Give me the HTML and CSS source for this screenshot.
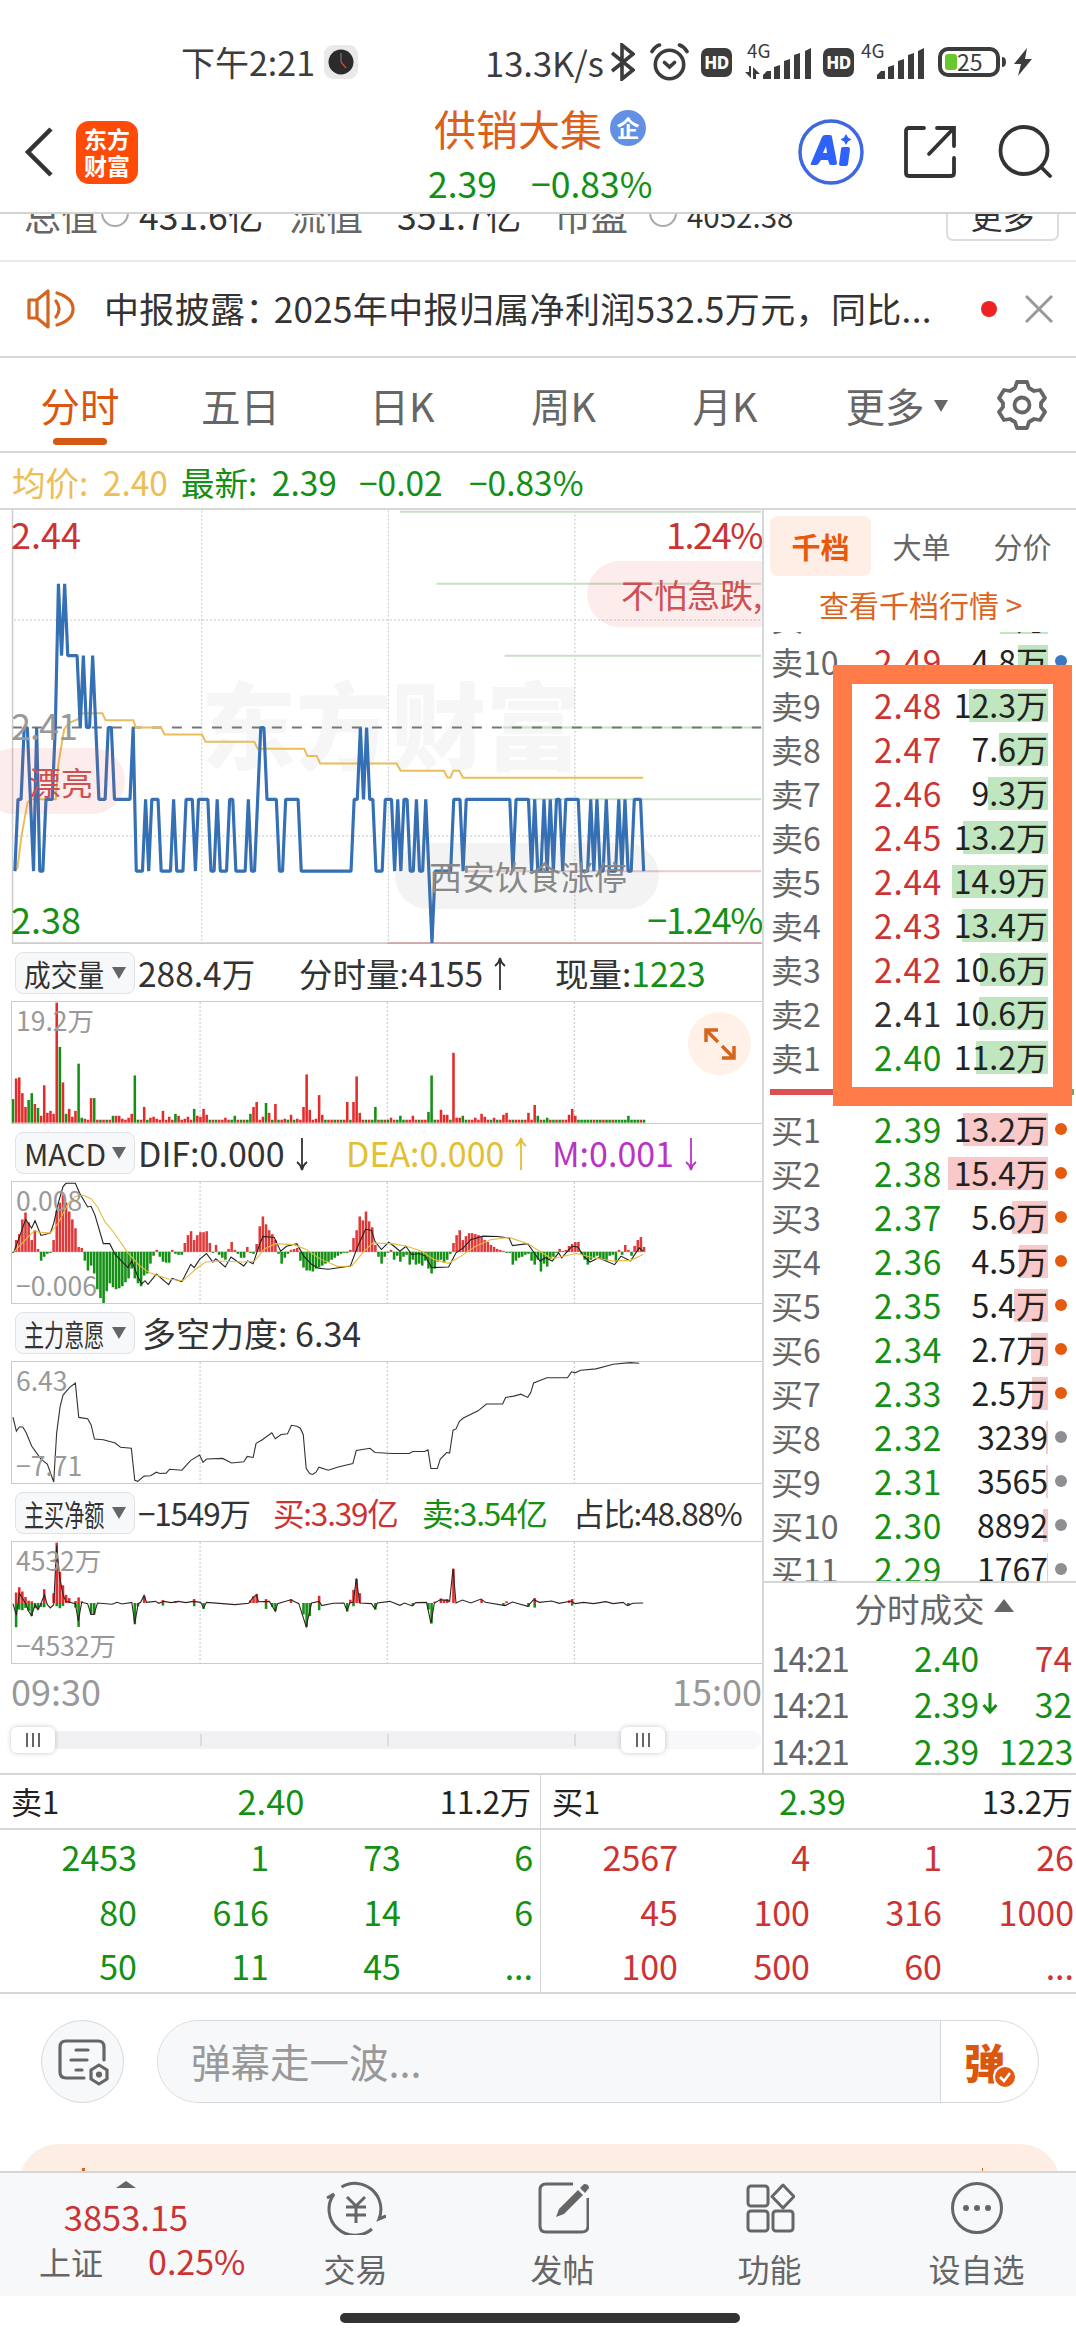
FILE: index.html
```html
<!DOCTYPE html>
<html lang="zh-CN">

<head>
    <meta charset="UTF-8">
    <title>供销大集</title>
    <link rel="stylesheet" href="styles.css">
</head>

<body>

    <div class="status-bar">
        <span class="time">下午2:21</span>
        <svg class="clock" width="34" height="34" viewBox="0 0 34 34">
            <rect width="34" height="34" rx="9" fill="#e9e9e9" />
            <circle cx="17" cy="17" r="12.5" fill="#2b2b2b" />
            <path d="M17 8v9" stroke="#777" stroke-width="1.2" />
            <path d="M17 17l5 6" stroke="#e0452f" stroke-width="1.2" />
        </svg>
        <span class="speed">13.3K/s</span>
        <svg class="bt" width="24" height="38" viewBox="0 0 24 38" fill="none" stroke="#3c3c3c" stroke-width="3.6">
            <path d="M1 10l21 17-11 9V2l11 9L1 28" />
        </svg>
        <svg class="alarm" width="39" height="38" viewBox="0 0 39 38" fill="none" stroke="#3c3c3c" stroke-width="3.6" stroke-linecap="round">
            <circle cx="19.5" cy="21.500" r="14.200" />
            <path d="M14.500 19.500l5 4.500 5-4.500M2 8.500q3-5 7.500-6.500M37 8.500q-3-5-7.500-6.500" />
        </svg>
        <span class="hd">HD</span>
        <svg class="signal" width="66" height="38" viewBox="0 0 66 38" fill="#3c3c3c">
            <text x="2" y="15" font-size="19">4G</text>
            <path d="M0 29h4v-6h2v12zM8 24l7 7h-4v5H8z" />
            <path d="M18 36v-4l4-4h4v8zM29 24l6-2v14h-6zM39 18l6-2v20h-6zM49 12l6-2v26h-6zM60 8l6-3v31h-6z" />
        </svg>
        <span class="hd hd2">HD</span>
        <svg class="signal2" width="64" height="38" viewBox="0 0 64 38" fill="#3c3c3c">
            <text x="0" y="15" font-size="19">4G</text>
            <path d="M16 36v-4l4-4h4v8zM27 24l6-2v14h-6zM37 18l6-2v20h-6zM47 12l6-2v26h-6zM57 8l6-3v31h-6z" />
        </svg>
        <svg class="battery" width="95" height="32" viewBox="0 0 95 32">
            <rect x="2" y="3" width="58" height="26" rx="8" fill="none" stroke="#3c3c3c" stroke-width="4" />
            <rect x="7" y="8" width="12" height="16" rx="3" fill="#6ac72d" />
            <path d="M64 11q4 0 4 5t-4 5z" fill="#3c3c3c" />
            <text x="19" y="24.500" font-size="23" fill="#3c3c3c">25</text>
            <path d="M89 2L76 18h7l-3 12 14-17h-7z" fill="#3c3c3c" />
        </svg>
    </div>

    <div class="header">
        <svg class="back" width="30" height="50" viewBox="0 0 30 50" fill="none" stroke="#333" stroke-width="4.500">
            <path d="M27 2L4 25l23 23" />
        </svg>
        <div class="logo">东方<br>财富</div>
        <div class="title">
            <div class="name">供销大集<span class="corp">企</span></div>
            <div class="quote"><span>2.39</span><span>−0.83%</span></div>
        </div>
        <svg class="ai" width="66" height="66" viewBox="0 0 66 66">
            <circle cx="33" cy="33" r="31" fill="none" stroke="#3f68e0" stroke-width="3.500" />
            <path d="M24 18q1-2 3-2h5q2 0 2 2l5 26q0 2-2 2h-4q-2 0-2-2l-1-3h-7l-2 3q-1 2-3 2h-4q-2 0-1-2zM25 34h4l-1-7z" fill="#2f62fb" fill-rule="evenodd" />
            <path d="M45 28h5q2 0 2 2l-2 15q0 2-2 2h-5q-2 0-2-2l2-15q0-2 2-2z" fill="#2f62fb" />
            <path d="M48 15l2 3.500 3.500 2-3.500 2-2 3.500-2-3.500-3.500-2 3.500-2z" fill="#2f62fb" />
        </svg>
        <svg class="share" width="54" height="54" viewBox="0 0 54 54" fill="none" stroke="#333" stroke-width="3.800" stroke-linecap="round">
            <path d="M21 3H6q-3 0-3 3v42q0 3 3 3h42q3 0 3-3V33M34 3h17v18M50 4L26 29" />
        </svg>
        <svg class="search" width="54" height="54" viewBox="0 0 54 54" fill="none" stroke="#333" stroke-width="3.800" stroke-linecap="round">
            <circle cx="26" cy="25.500" r="23.500" />
            <path d="M43 42l9 9" />
        </svg>
    </div>

    <div class="summary">
        <span class="lab">总值</span><i class="tip"></i><span class="v1">431.6亿</span>
        <span class="lab l2">流值</span><span class="v2">351.7亿</span>
        <span class="lab l3">市盈</span><i class="tip t2"></i><span class="v3">4052.38</span>
        <span class="more-btn">更多</span>
    </div>

    <div class="notice">
        <svg width="48" height="40" viewBox="0 0 48 40" fill="none" stroke="#d4651f" stroke-width="3.200" stroke-linejoin="round" stroke-linecap="round">
            <path d="M2 11h8L21 2v36l-11-9H2zM10 11v18M29 12q6 8 0 16M30 4q16 5 16 16T30 36" />
        </svg>
        <span class="notice-text"><span class="kind">中报披露：</span>2025年中报归属净利润532.5万元，同比...</span>
        <i class="red-dot"></i>
        <svg width="28" height="28" viewBox="0 0 28 28" stroke="#999" stroke-width="3">
            <path d="M1 1l26 26M27 1L1 27" />
        </svg>
    </div>

    <div class="tabs">
        <span class="tab active">分时</span>
        <span class="tab">五日</span>
        <span class="tab">日K</span>
        <span class="tab">周K</span>
        <span class="tab">月K</span>
        <span class="tab tab-more">更多<i class="tri"></i></span>
        <svg class="gear" width="50" height="50" viewBox="0 0 50 50" fill="none" stroke="#666" stroke-width="3.800" stroke-linejoin="round">
            <path d="M20 2h10l2 6 5 3 6-1 5 8-4 5v4l4 5-5 8-6-1-5 3-2 6H20l-2-6-5-3-6 1-5-8 4-5v-4l-4-5 5-8 6 1 5-3z" />
            <circle cx="25" cy="25" r="7.500" />
        </svg>
    </div>

    <div class="info">
        <span class="avg">均价: 2.40</span>
        <span>最新: 2.39</span>
        <span>−0.02</span>
        <span>−0.83%</span>
    </div>

    <div class="main">
        <div class="left">
            <div class="chart price-chart">
                <span class="watermark">东方财富</span>
                <svg id="price" viewBox="33 30 2256 1305"></svg>
                <span class="ylab top red">2.44</span>
                <span class="ylab mid">2.41</span>
                <span class="ylab low green">2.38</span>
                <span class="ylab top right red">1.24%</span>
                <span class="ylab low right green">−1.24%</span>
                <span class="bullet b1">漂亮</span>
                <span class="bullet b2">不怕急跌,</span>
                <span class="bullet b3">西安饮食涨停</span>
            </div>

            <div class="sub-head vol-head">
                <span class="pick"><b class="c3">成交量</b><i class="tri"></i></span>
                <span>288.4万</span>
                <span class="val">分时量:4155<svg class="arrow" viewBox="0 0 14 34"><path d="M7 33V1M2 9q4-3 5-8 1 5 5 8" /></svg></span>
                <span>现量:<span class="green">1223</span></span>
            </div>
            <div class="chart sub">
                <svg id="volume" viewBox="22 184 1531 369" preserveAspectRatio="none"></svg>
                <span class="slab s-top">19.2万</span>
                <svg class="expand" width="63" height="63" viewBox="0 0 63 63" fill="none" stroke="#d4651f" stroke-width="3.500">
                    <circle cx="31.500" cy="31.500" r="31.500" fill="#fff0e8" stroke="none" />
                    <path d="M30 18H18v12M18 18l12 12M34 46h12V34M46 46L34 34" />
                </svg>
            </div>

            <div class="sub-head macd-head">
                <span class="pick"><b>MACD</b><i class="tri"></i></span>
                <span class="val">DIF:0.000<svg class="arrow" viewBox="0 0 14 34"><path d="M7 1v32M2 25q4 3 5 8 1-5 5-8" /></svg></span>
                <span class="val yellow">DEA:0.000<svg class="arrow" viewBox="0 0 14 34"><path d="M7 33V1M2 9q4-3 5-8 1 5 5 8" /></svg></span>
                <span class="val purple">M:0.001<svg class="arrow" viewBox="0 0 14 34"><path d="M7 1v32M2 25q4 3 5 8 1-5 5-8" /></svg></span>
            </div>
            <div class="chart sub">
                <svg id="macd" viewBox="22 724 1531 369" preserveAspectRatio="none"></svg>
                <span class="slab s-top">0.008</span>
                <span class="slab s-low">−0.006</span>
            </div>

            <div class="sub-head power-head">
                <span class="pick"><b class="c4">主力意愿</b><i class="tri"></i></span>
                <span>多空力度: 6.34</span>
            </div>
            <div class="chart sub">
                <svg id="power" viewBox="22 184 1531 369" preserveAspectRatio="none"></svg>
                <span class="slab s-top">6.43</span>
                <span class="slab s-low">−7.71</span>
            </div>

            <div class="sub-head net-head">
                <span class="pick"><b class="c4">主买净额</b><i class="tri"></i></span>
                <span>−1549万</span><span class="red">买:3.39亿</span><span class="green">卖:3.54亿</span><span>占比:48.88%</span>
            </div>
            <div class="chart sub">
                <svg id="net" viewBox="22 724 1531 369" preserveAspectRatio="none"></svg>
                <span class="slab s-top">4532万</span>
                <span class="slab s-low">−4532万</span>
            </div>

            <div class="times"><span>09:30</span><span>15:00</span></div>
            <div class="slider">
                <div class="track"></div>
                <i class="handle h1"></i>
                <i class="handle h2"></i>
            </div>
        </div>

        <div class="right">
            <div class="book-tabs">
                <span class="book-tab on">千档</span>
                <span class="book-tab">大单</span>
                <span class="book-tab">分价</span>
            </div>
            <div class="book-link">查看千档行情 &gt;</div>
            <div class="book">
                <div id="asks"></div>
                <div class="ratio"></div>
                <div id="bids"></div>
            </div>
            <div class="mark-box"></div>
            <div class="deals">
                <div class="deals-title">分时成交<i class="tri up"></i></div>
                <div class="deal"><span>14:21</span><span class="green">2.40</span><i></i><span class="red">74</span></div>
                <div class="deal"><span>14:21</span><span class="green">2.39</span><i>
                    <svg width="16" height="22" viewBox="0 0 16 22" fill="none" stroke="#149014" stroke-width="3"><path d="M8 0v19M1.500 12L8 19l6.500-7" /></svg>
                </i><span class="green">32</span></div>
                <div class="deal"><span>14:21</span><span class="green">2.39</span><i></i><span class="green">1223</span></div>
            </div>
        </div>
    </div>

    <div class="queues">
        <div class="queue">
            <div class="queue-head"><span>卖1</span><span class="green">2.40</span><span>11.2万</span></div>
            <div class="queue-grid green">
                <span>2453</span><span>1</span><span>73</span><span>6</span>
                <span>80</span><span>616</span><span>14</span><span>6</span>
                <span>50</span><span>11</span><span>45</span><span>...</span>
            </div>
        </div>
        <div class="queue">
            <div class="queue-head"><span>买1</span><span class="green">2.39</span><span>13.2万</span></div>
            <div class="queue-grid red">
                <span>2567</span><span>4</span><span>1</span><span>26</span>
                <span>45</span><span>100</span><span>316</span><span>1000</span>
                <span>100</span><span>500</span><span>60</span><span>...</span>
            </div>
        </div>
    </div>

    <div class="danmu">
        <div class="danmu-set">
            <svg width="52" height="48" viewBox="0 0 52 48" fill="none" stroke="#666" stroke-width="3.200" stroke-linecap="round">
                <path d="M27 40H9q-6 0-6-6V9q0-6 6-6h32q6 0 6 6v13M19 12h12M14 22h16M19 32h6" />
                <path d="M42 27l8 5v9l-8 5-8-5v-9z" stroke-linejoin="round" />
                <circle cx="42" cy="36.500" r="1.500" fill="#666" />
            </svg>
        </div>
        <div class="danmu-box">
            <span class="danmu-input">弹幕走一波...</span>
            <span class="danmu-send">弹
                <svg width="24" height="24" viewBox="0 0 24 24" fill="none">
                    <circle cx="12" cy="12" r="11" fill="#e05a10" stroke="#fff" stroke-width="2" />
                    <path d="M7 12l4 4 6-8" stroke="#fff" stroke-width="2.500" />
                </svg>
            </span>
        </div>
    </div>

    <div class="promo-wrap"><div class="promo"><i></i><i></i></div></div>

    <div class="nav">
        <div class="index">
            <i class="tri up"></i>
            <div class="index-value">3853.15</div>
            <div class="index-row"><span>上证</span><span class="red">0.25%</span></div>
        </div>
        <div class="nav-item">
            <svg width="60" height="54" viewBox="0 0 60 54" fill="none" stroke="#666" stroke-width="3">
                <path d="M15.500 6A26 26 0 0 1 53 38l7-3M46 48A26 26 0 0 1 8 13l-7 4M21 16l9 9 9-9M30 25v17M20 26h20M20 34h20" />
            </svg>
            <span>交易</span>
        </div>
        <div class="nav-item">
            <svg width="52" height="54" viewBox="0 0 52 54" fill="none" stroke="#666" stroke-width="3">
                <path d="M36 3H9Q3 3 3 9v36q0 6 6 6h36q6 0 6-6V17" />
                <path d="M19 36l3-8 19-19 5 5-19 19zM43 7l4-4q5 0 5 4l-4 5z" fill="#666" stroke="none" />
            </svg>
            <span>发帖</span>
        </div>
        <div class="nav-item">
            <svg width="50" height="54" viewBox="0 0 50 54" fill="none" stroke="#666" stroke-width="3" stroke-linejoin="round">
                <rect x="3" y="5" width="20" height="20" rx="3" />
                <rect x="3" y="30" width="20" height="20" rx="3" />
                <rect x="28" y="30" width="20" height="20" rx="3" />
                <path d="M38 4l11 11.500L38 27 27 15.500z" />
            </svg>
            <span>功能</span>
        </div>
        <div class="nav-item">
            <svg width="54" height="54" viewBox="0 0 54 54" fill="none" stroke="#666" stroke-width="3">
                <circle cx="27" cy="27" r="24.500" />
                <g fill="#666" stroke="none"><circle cx="16" cy="27" r="3" /><circle cx="27" cy="27" r="3" /><circle cx="38" cy="27" r="3" /></g>
            </svg>
            <span>设自选</span>
        </div>
    </div>
    <div class="home-bar"></div>

    <script src="script.js"></script>
</body>

</html>
```

FILE: styles.css
```css
* {
    box-sizing: border-box;
}

body {
    margin: 0;
    width: 1076px;
    height: 2340px;
    overflow: hidden;
    background: #fff;
    color: #333;
    font-family: "Noto Sans CJK SC", sans-serif;
    font-size: 33px;
    line-height: 1;
    white-space: nowrap;
}

i {
    font-style: normal;
}

svg {
    display: block;
    flex: none;
}

.red { color: #cc3333; }
.green { color: #149014; }
.yellow { color: #e3bf33; }
.purple { color: #bb33c4; }

.tri {
    display: inline-block;
    border: 7px solid transparent;
    border-top: 12px solid #666;
    border-bottom: 0;
}

.tri.up {
    border-top: 0;
    border-bottom: 12px solid #666;
}

/* status bar */
.status-bar {
    display: flex;
    align-items: center;
    height: 96px;
    padding: 28px 0 0 181px;
    color: #3c3c3c;
}

.status-bar svg text {
    font-family: "Noto Sans CJK SC", sans-serif;
}

.time {
    width: 143px;
    font-size: 34px;
}

.speed {
    width: 124px;
    margin-left: 127px;
    font-size: 34.5px;
}

.bt { margin-left: 2px; }
.alarm { margin-left: 15px; }

.hd {
    width: 31px;
    height: 29px;
    margin-left: 12px;
    border-radius: 7px;
    background: #3c3c3c;
    color: #fff;
    font: 800 17px/29px "Noto Sans", sans-serif;
    letter-spacing: -0.5px;
    text-align: center;
}

.signal { margin-left: 13px; }
.hd2 { margin-left: 12px; }
.signal2 { margin-left: 7px; }
.battery { margin-left: 13px; }

/* header */
.header {
    display: flex;
    align-items: center;
    height: 118px;
    padding-left: 24px;
    padding-bottom: 4px;
    border-bottom: 2px solid #d4d4d4;
}

.logo {
    width: 62px;
    height: 63px;
    margin-left: 22px;
    padding-top: 4px;
    border-radius: 13px;
    background: #fe4b08;
    color: #fff;
    font-size: 23px;
    font-weight: 700;
    line-height: 27px;
    text-align: center;
}

.title {
    width: 230px;
    margin-left: 290px;
    padding-top: 10px;
}

.name {
    display: flex;
    align-items: center;
    height: 52px;
    padding-left: 6px;
    color: #dc6019;
    font-size: 42px;
}

.corp {
    width: 36px;
    height: 36px;
    margin-left: 8px;
    border-radius: 50%;
    background: #6390e5;
    color: #fff;
    font-size: 23px;
    font-weight: 700;
    line-height: 34px;
    text-align: center;
}

.quote {
    display: flex;
    gap: 34px;
    height: 58px;
    align-items: center;
    color: #149014;
    font-size: 35.5px;
}

.ai { margin-left: 140px; }
.share { margin-left: 39px; }
.search { margin-left: 41px; }

/* scrolled summary row */
.summary {
    display: flex;
    height: 48px;
    overflow: hidden;
    padding-left: 24px;
    border-bottom: 2px solid #e8e8e8;
    font-size: 35.5px;
    line-height: 46px;
}

.summary > * {
    flex: none;
    margin-top: -22px;
}

.summary .lab {
    width: 77px;
    color: #666;
    font-size: 37px;
}

.summary .tip {
    width: 28px;
    height: 28px;
    margin-top: -15px;
    border: 2px solid #aaa;
    border-radius: 50%;
}

.summary .v1 { width: 150px; margin-left: 10px; }
.summary .v2 { width: 157px; margin-left: 31px; }
.summary .t2 { margin-left: 18px; }
.summary .v3 { width: 259px; margin-left: 10px; font-size: 29.5px; }

.summary .more-btn {
    width: 113px;
    height: 49px;
    border: 2px solid #ddd;
    border-radius: 7px;
    font-size: 32px;
    line-height: 43px;
    text-align: center;
}

.notice {
    display: flex;
    align-items: center;
    height: 96px;
    padding-left: 27px;
    border-bottom: 2px solid #d6d6d6;
}

.notice-text {
    width: 876px;
    padding: 0 0 3px 29px;
    font-size: 35px;
    letter-spacing: 0.35px;
}

.kind {
    margin-right: -7px;
}

.red-dot {
    width: 16px;
    height: 16px;
    margin: 0 28px 0 30px;
    border-radius: 50%;
    background: #ee2222;
}

.tabs {
    display: grid;
    grid-template-columns: 160px 161px 162px 161px 162px 194px 76px;
    align-items: center;
    height: 95px;
    border-bottom: 2px solid #d6d6d6;
    color: #666;
    font-size: 39.5px;
    text-align: center;
}

.tab {
    height: 93px;
    line-height: 93px;
}

.tab.active {
    position: relative;
    color: #d9570f;
}

.tab.active::after {
    content: "";
    position: absolute;
    left: 53px;
    bottom: 6px;
    width: 54px;
    height: 7px;
    border-radius: 4px;
    background: #d45a14;
}

.tab-more { padding-right: 13px; }
.tab-more .tri { margin-left: 9px; vertical-align: 10px; }

.gear { margin-left: -3px; }

.info {
    display: grid;
    grid-template-columns: 169px 178px 110px 1fr;
    align-items: center;
    height: 57px;
    padding: 2px 0 0 12px;
    border-bottom: 2px solid #d6d6d6;
    color: #149014;
    font-size: 33.5px;
    word-spacing: 7px;
}

.info .avg { color: #ecbe55; }

/* main area */
.main {
    display: flex;
    height: 1265px;
    border-bottom: 2px solid #d6d6d6;
}

.left {
    width: 764px;
    padding-left: 11px;
    border-right: 2px solid #d3d9db;
}

.chart {
    position: relative;
    width: 751px;
    overflow: hidden;
}

.chart > svg:first-of-type {
    width: 752px;
    height: 100%;
}

.price-chart {
    height: 434px;
    overflow: visible;
    clip-path: inset(0 0 0 -11px);
}

.chart span {
    position: absolute;
}

.watermark {
    left: 190px;
    top: 164px;
    color: #f6f6f7;
    font-size: 95px;
    font-weight: 900;
}

.price-chart svg {
    position: relative;
}

.ylab { left: 0; font-size: 36px; }
.ylab.right { left: auto; right: 0; letter-spacing: -1.4px; }
.ylab.top { top: 5px; }
.ylab.mid { top: 196px; color: #999; letter-spacing: -1px; }
.ylab.low { top: 390px; }

.bullet {
    height: 66px;
    border-radius: 33px;
    background: rgba(235, 80, 80, 0.11);
    color: #cf5050;
    line-height: 66px;
}

.b1 { left: -30px; top: 238px; width: 144px; padding-left: 48px; font-size: 32px; }
.b2 { left: 576px; top: 51px; width: 210px; padding-left: 34px; }
.b3 { left: 384px; top: 333px; width: 264px; padding-left: 34px; background: rgba(120, 120, 120, 0.09); color: #888; }

.sub {
    height: 123px;
    border: 1.5px solid #ccc;
    border-right: 0;
}

.sub > svg:first-of-type {
    margin-left: -2px;
}

.slab {
    left: 4px;
    color: #999;
    font-size: 26.5px;
}

.s-top { top: 5px; }
.s-low { top: 90px; }

.expand {
    position: absolute;
    right: 11px;
    top: 10px;
}

.sub-head {
    display: grid;
    align-items: center;
    height: 57px;
    padding-left: 4px;
}

.sub-head .val {
    display: flex;
    align-items: center;
}

.arrow {
    width: 14px;
    height: 34px;
    margin: 2px 0 0 10px;
    fill: none;
    stroke: currentColor;
    stroke-width: 1.8;
}

.vol-head { grid-template-columns: 123px 161px 256px auto; font-size: 33.5px; }
.macd-head { grid-template-columns: 123px 208px 206px auto; font-size: 34px; }
.power-head { grid-template-columns: 127px auto; font-size: 34px; }
.net-head { grid-template-columns: 123px 135px 149px 151px auto; font-size: 31.5px; letter-spacing: -1.2px; }

.pick {
    display: flex;
    align-items: center;
    width: 120px;
    height: 42px;
    padding-left: 8px;
    border: 1.5px solid #e0e3e6;
    border-radius: 8px;
    background: #f7f8fa;
    letter-spacing: 0;
}

.pick b {
    width: 88px;
    font-size: 30px;
    font-weight: 400;
    transform-origin: left;
}

.pick .c3 { transform: scaleX(0.89); }
.pick .c4 { font-size: 30px; transform: scaleX(0.67); }

.times {
    display: flex;
    justify-content: space-between;
    width: 751px;
    height: 57px;
    padding-top: 8px;
    color: #999;
    font-size: 36px;
}

.slider {
    position: relative;
    width: 750px;
    padding-top: 10px;
}

.track {
    height: 18px;
    border-radius: 9px;
    background:
        linear-gradient(#ddd, #ddd) 189px 3px / 2px 12px no-repeat,
        linear-gradient(#ddd, #ddd) 376px 3px / 2px 12px no-repeat,
        linear-gradient(#ddd, #ddd) 563px 3px / 2px 12px no-repeat,
        linear-gradient(90deg, #f1f1f3 630px, #f8f8fb 630px);
}

.handle {
    position: absolute;
    top: 6px;
    width: 44px;
    height: 26px;
    border-radius: 6px;
    background:
        linear-gradient(90deg, #666 2px, transparent 2px) 15px 6px / 6px 14px repeat-x,
        #fff;
    box-shadow: 0 0 5px rgba(0, 0, 0, 0.22);
    background-clip: content-box, border-box;
    background-origin: border-box;
    padding: 6px 14px;
}

.h1 { left: 0; }
.h2 { left: 610px; }

/* order book */
.right {
    position: relative;
    flex: 1;
}

.book-tabs {
    display: flex;
    height: 72px;
    padding: 6px 0 0 6px;
}

.book-tab {
    width: 101px;
    height: 60px;
    border-radius: 8px;
    color: #666;
    font-size: 29px;
    line-height: 60px;
    text-align: center;
}

.book-tab.on {
    background: #ffeee6;
    color: #e8590c;
    font-weight: 700;
}

.book-link {
    height: 50px;
    padding-left: 55px;
    color: #dc661f;
    font-size: 30px;
    line-height: 45px;
}

.book {
    height: 951px;
    overflow: hidden;
    border-bottom: 2px solid #d6d6d6;
}

#asks {
    margin-top: -37px;
}

.level {
    display: grid;
    grid-template-columns: 72px 99px 106px 1fr;
    align-items: center;
    height: 44px;
    padding-left: 7px;
    font-size: 32px;
}

.level .label { color: #666; }

.level .px {
    font-size: 33.5px;
    letter-spacing: 0.7px;
    text-align: right;
}

.level .qty {
    position: relative;
    height: 33px;
    line-height: 31px;
    text-align: right;
    color: #222;
}

.level .bar {
    position: absolute;
    right: 0;
    top: 0;
    height: 33px;
    z-index: -1;
}

.ask { background: #bfe6bf; }
.bid { background: #f9c9c9; }

.level .dot {
    width: 12px;
    height: 12px;
    margin-left: 7px;
    border-radius: 50%;
}

.ratio {
    height: 6px;
    margin: 10px 2px 12px 6px;
    background: linear-gradient(90deg, #dc5050 60%, #7aa84a 60%);
}

/* hand-drawn highlight over the ask levels */
.mark-box {
    position: absolute;
    left: 69px;
    top: 155px;
    width: 239px;
    height: 441px;
    border: 19px solid #ff7b47;
}

.deals {
    color: #666;
}

.deals-title {
    display: flex;
    align-items: center;
    justify-content: center;
    gap: 9px;
    height: 51px;
    padding-left: 28px;
    font-size: 32.5px;
}

.deals-title .tri {
    border-width: 0 10px 13px;
    margin-top: -6px;
}

.deal {
    display: grid;
    grid-template-columns: 91px 117px 20px 73px;
    align-items: center;
    height: 46.5px;
    padding-left: 7px;
    font-size: 33.5px;
}

.deal i { padding-left: 3px; }

.deal span:first-child {
    letter-spacing: -1.2px;
}

.deal span + span,
.deal i + span {
    text-align: right;
}

/* best bid / ask queues */
.queues {
    display: flex;
    height: 219px;
    border-bottom: 2px solid #d6d6d6;
    font-size: 31px;
}

.queue {
    width: 540px;
}

.queue + .queue {
    width: 536px;
    border-left: 1.5px solid #d6d6d6;
}

.queue-head {
    display: grid;
    grid-template-columns: 140px 1fr 140px;
    align-items: center;
    height: 55px;
    padding: 0 9px 2px 11px;
    border-bottom: 2px solid #d6d6d6;
    color: #222;
    text-align: center;
}

.queue-head .green { font-size: 34.5px; }

.queue + .queue .queue-head { padding-right: 3px; }
.queue-head span:first-child { text-align: left; }
.queue-head span:last-child { text-align: right; }

.queue-grid {
    display: grid;
    grid-template-columns: 137px 132px 132px 132px;
    grid-auto-rows: 54.5px;
    align-items: center;
    font-size: 34px;
    text-align: right;
}

/* danmu input */
.danmu {
    display: flex;
    height: 150px;
    padding: 26px 0 0 41px;
}

.danmu-set {
    display: flex;
    align-items: center;
    justify-content: center;
    width: 83px;
    height: 83px;
    margin-right: 33px;
    border: 1.5px solid #d6d9dc;
    border-radius: 50%;
    background: #f7f8fa;
}

.danmu-box {
    display: flex;
    width: 882px;
    height: 83px;
    overflow: hidden;
    border: 1.5px solid #d6d9dc;
    border-radius: 42px;
    line-height: 80px;
}

.danmu-input {
    flex: 1;
    padding-left: 33px;
    background: #f7f8fa;
    color: #999;
    font-size: 39.5px;
}

.danmu-send {
    position: relative;
    width: 98px;
    padding-left: 23px;
    border-left: 1.5px solid #d6d9dc;
    color: #d9570f;
    font-size: 41px;
    font-weight: 900;
}

.danmu-send svg {
    position: absolute;
    left: 52px;
    top: 44px;
}

.promo-wrap {
    height: 27px;
    overflow: hidden;
}

.promo {
    display: flex;
    justify-content: space-between;
    height: 90px;
    margin: 0 16px 0 19px;
    padding: 24px 77px 0 63px;
    border-radius: 40px;
    background: #fdede3;
}

.promo i {
    width: 3px;
    height: 3px;
    background: #d4651f;
}

.promo i + i {
    width: 1px;
}

/* bottom nav */
.nav {
    display: grid;
    grid-template-columns: 252px repeat(4, 207px);
    height: 125px;
    border-top: 2px solid #d6d6d6;
    background: #f7f8fa;
    color: #666;
    font-size: 32px;
}

.nav-item {
    display: flex;
    flex-direction: column;
    align-items: center;
    padding-top: 8px;
}

.nav-item span {
    margin-top: 17px;
}

.index {
    text-align: center;
}

.index .tri {
    display: block;
    width: 0;
    margin: 8px auto 0;
    border-width: 0 10px 7px;
}

.index-value {
    margin-top: 11px;
    color: #cc3333;
    font-size: 34.5px;
}

.index-row {
    display: flex;
    align-items: center;
    gap: 45px;
    margin-top: 10px;
    padding-left: 39px;
}

.index-row .red { font-size: 34px; }

.home-bar {
    width: 400px;
    height: 10px;
    margin: 17px 0 0 340px;
    border-radius: 5px;
    background: #333;
}
```

FILE: script.js
```javascript
const NS = "http://www.w3.org/2000/svg";

function draw(svg, tag, attrs) {
    const el = document.createElementNS(NS, tag);
    for (const key in attrs) {
        el.setAttribute(key, attrs[key]);
    }
    svg.appendChild(el);
    return el;
}

function line(svg, x1, y1, x2, y2, color, width, dash) {
    draw(svg, "path", {
        d: `M${x1} ${y1}L${x2} ${y2}`,
        stroke: color,
        "stroke-width": width,
        "stroke-dasharray": dash || "none",
        "vector-effect": "non-scaling-stroke"
    });
}

// minute price, "level*minutes"
const prices = "39 40*2 41*2 40 39 41 39*2 40*3 41 43 42 43 42*4 41 42 41*2 42 41 40*3 41*2 40*6 " +
    "41 39*3 40 39 40*3 39*4 40 39*3 40*3 39 40*4 39*2 40 39*3 40*2 39*4 40 39*2 40 41*2 40*4 " +
    "39*2 40*5 39*17 40*2 41 40 41 40*2 39*3 40*3 39 40 39 40*2 39*2 40 39*2 40 39 38 39*6 " +
    "40*3 39 40*15 39 40*5 39 40 39*2 40 39 40 39 40*2 39 40*5 39*3 40 39 40 39*2 40 39*3 40 39 40 39*2 40*3 39";

function drawPrice() {
    const svg = document.getElementById("price");
    [604, 1165, 1726].forEach(x => line(svg, x, 32, x, 1333, "#c4c4c4", 1, "2 2"));
    [361, 1010].forEach(y => line(svg, 40, y, 2286, y, "#c4c4c4", 1, "2 2"));

    [[1200, 35], [1310, 252], [1515, 468], [1510, 684], [1585, 900]].forEach(p => {
        line(svg, p[0], p[1], 2286, p[1], "#c9dfc9", 2);
    });
    line(svg, 1400, 1116, 2286, 1116, "#eccaca", 2);
    line(svg, 33, 684, 2286, 684, "#777", 1.8, "10 10");
    line(svg, 35, 30, 35, 1333, "#ccc", 1.5);
    line(svg, 33, 1333, 2289, 1333, "#ccc", 2);
    line(svg, 1162, 1333, 2286, 1333, "#d3a5a5", 2);

    draw(svg, "polyline", {
        points: "42,1116 50,1105 62,1010 80,910 90,900 165,900 172,800 190,690 205,670 230,660 245,641 305,641 " +
            "315,662 398,662 406,684 482,684 492,705 605,705 615,727 762,727 772,748 912,748 922,770 950,770 " +
            "960,792 1190,792 1202,814 1332,814 1343,834 1352,834 1360,814 1378,814 1390,835 1931,835",
        fill: "none", stroke: "#e9bd5c", "stroke-width": 6
    });

    const pts = [];
    prices.split(" ").forEach(run => {
        const [level, count] = run.split("*");
        for (let n = 0; n < (count || 1); n++) {
            pts.push(`${42 + pts.length * 9.36},${684 + (41 - level) * 216}`);
        }
    });
    draw(svg, "polyline", {
        points: pts.join(" "), fill: "none", stroke: "#3570b5", "stroke-width": 9.5, "stroke-linejoin": "bevel"
    });
}

const STEP = 6.36;

function grid(svg, top) {
    [409, 790, 1171].forEach(x => line(svg, x, top, x, top + 369, "#c4c4c4", 1, "2 2"));
}

function bar(svg, i, y, h, color) {
    draw(svg, "rect", { x: 25.5 + i * STEP, y: y, width: 5.2, height: h, fill: color });
}

function curve(svg, points, color) {
    draw(svg, "polyline", {
        points: points, fill: "none", stroke: color, "stroke-width": 1.1, "vector-effect": "non-scaling-stroke"
    });
}

// minute:height, negative means a falling minute
const volumes = "0:-24 1:45 2:46 3:30 4:16 5:-23 6:-30 7:19 8:-15 9:7 10:38 11:10 12:12 13:9 14:122 15:-77 16:41 " +
    "17:-9 18:14 19:6 20:12 21:-60 22:-5 23:4 25:25 26:-25 32:-7 33:7 34:7 35:4 37:5 38:9 39:-48 42:16 44:5 45:6 " +
    "46:4 48:12 50:6 52:-9 53:7 55:4 56:6 58:-14 59:7 60:6 61:14 62:8 68:5 71:-7 76:-9 77:16 78:21 80:6 81:-20 " +
    "82:10 84:19 87:4 89:8 91:4 93:16 94:49 95:13 97:4 98:28 99:8 107:21 109:21 110:47 111:10 116:-16 121:5 " +
    "124:-7 128:7 133:-11 134:-48 137:13 138:8 139:8 141:71 142:5 143:5 144:-7 148:5 150:9 151:6 154:5 157:8 " +
    "158:10 165:10 167:18 168:-7 171:-5 178:8 179:14 180:7 197:-7";

function drawVolume() {
    const svg = document.getElementById("volume");
    grid(svg, 184);
    const map = {};
    volumes.split(" ").forEach(v => {
        const [i, h] = v.split(":");
        map[i] = Number(h);
    });
    for (let i = 0; i <= 202; i++) {
        const h = map[i] || (i * 7 % 5 < 2 || i > 180 && i % 3 ? -3 : 3);
        bar(svg, i, 552 - Math.abs(h) * 3, Math.abs(h) * 3, h > 0 ? "#e32b2b" : "#149014");
    }
}

const macd = [0, 12, 18, 33, 40, 30, 12, 22, 3, -9, -5, -2, 0, 12, 42, 50, 58, 50, 41, 33, 24, 5, 4, -9, -19, -14,
    -22, -38, -47, -52, -40, -32, -36, -38, -37, -35, -31, -27, -17, -27, -32, -35, -24, -22, -12, -4, 2, -5, -10,
    -11, -11, 2, -2, -3, -3, 9, 17, 21, 12, 17, 20, 20, 21, 9, 0, 7, -3, -6, -8, 3, 10, 2, -2, -6, -6, 5, 0, -2, 8,
    26, 36, 28, 22, 18, 12, -2, -12, -6, -2, 2, 3, 4, -9, -16, -19, -19, -20, -17, -16, -14, -12, -10, -8, -6, -4,
    -2, 0, 0, 2, 14, 22, 36, 32, 41, 31, 25, 7, -5, -12, -5, 0, 2, -8, -4, -10, -5, -3, -13, -8, -13, -12, -14, -9,
    -17, -22, -17, -10, -8, -11, -8, -2, 9, 17, 22, 12, 16, 19, 19, 18, 17, 15, 12, 10, 7, 5, 3, 2, 1, 0, 0, -13,
    -9, -6, -5, -3, -2, -9, -13, -8, -20, -12, -15, -7, -5, 0, 3, 1, 2, 6, 8, 10, 10, -2, -8, -13, -8, -6, -4, -6,
    -8, -9, -4, -3, -10, 2, -3, 7, 2, -4, 6, 12, 15, 5];

function drawMacd() {
    const svg = document.getElementById("macd");
    grid(svg, 724);
    line(svg, 28, 937, 1311, 937, "#c99", 0.6);
    macd.slice(0, 203).forEach((h, i) => {
        bar(svg, i, h > 0 ? 937 - h * 3 : 937, Math.max(Math.abs(h) * 3, 3), h > 0 ? "#df3a3a" : "#149014");
    });
    curve(svg, "30,937 54,838 66,865 73,842 85,887 104,880 111,850 120,790 130,738 136,728 155,728 164,758 180,800 " +
        "187,798 195,825 212,912 225,912 236,945 262,985 270,965 282,1012 290,1035 297,1025 303,1036 320,1005 " +
        "345,1037 352,1018 372,1028 390,975 397,985 408,960 422,942 435,968 441,958 460,983 472,953 498,980 " +
        "506,965 517,973 530,915 537,890 560,893 573,935 585,920 606,912 620,950 636,975 650,987 670,990 " +
        "715,980 730,920 746,868 758,872 765,905 778,930 793,908 804,920 816,935 828,920 840,945 855,942 " +
        "868,950 880,985 915,983 930,940 945,925 960,900 985,889 1015,890 1038,895 1045,918 1076,912 " +
        "1090,942 1101,965 1112,955 1126,965 1139,940 1145,955 1166,920 1178,922 1190,950 1203,968 1220,955 " +
        "1253,976 1266,950 1285,965 1303,925 1311,935", "#222");
    curve(svg, "30,937 60,890 72,872 80,877 104,880 120,850 140,790 155,768 170,764 187,775 200,800 215,845 " +
        "232,875 262,940 285,978 305,1000 320,1008 345,1020 374,1025 400,990 420,968 445,965 495,968 520,965 " +
        "540,928 562,912 600,915 625,930 655,960 690,982 718,980 740,940 760,910 800,912 830,920 860,935 " +
        "885,960 915,972 940,950 970,920 1000,900 1038,893 1076,912 1100,935 1125,958 1175,942 1210,955 " +
        "1250,965 1285,963 1311,945", "#e6bb3c");
}

function drawPower() {
    const svg = document.getElementById("power");
    grid(svg, 184);
    curve(svg, "28,352 35,395 41,382 48,382 55,400 66,440 85,480 98,495 111,550 117,400 124,320 130,285 143,262 " +
        "155,248 162,353 180,357 187,375 194,419 212,421 236,431 247,444 269,447 276,545 282,548 295,532 " +
        "308,531 320,520 327,524 340,523 347,511 372,514 390,484 408,468 415,490 422,480 455,478 473,492 " +
        "498,488 505,472 517,475 523,432 535,422 555,400 562,418 574,405 587,403 595,377 606,380 613,386 " +
        "619,405 625,508 632,524 638,527 645,520 651,505 670,514 690,504 720,494 727,454 755,447 765,460 " +
        "800,463 835,463 842,457 866,457 873,452 879,509 892,509 898,480 911,460 917,462 924,392 930,388 " +
        "937,365 945,355 975,333 992,312 1025,312 1031,292 1048,288 1062,282 1076,292 1082,278 1088,248 " +
        "1115,232 1157,232 1165,214 1172,217 1184,209 1215,205 1250,191 1285,186 1303,188", "#333");
}

function drawNet() {
    const svg = document.getElementById("net");
    grid(svg, 724);
    const up = "1:32 2:48 3:35 4:18 5:7 6:5 10:42 13:30 14:184 15:95 16:54 17:25 18:15 20:6 21:17 22:5 42:22 48:9 52:6 " +
        "58:12 76:8 77:20 78:28 81:12 89:12 98:22 108:10 109:40 110:73 111:30 135:4 137:14 138:10 139:12 " +
        "141:104 150:10 158:5 167:15 178:8 179:12";
    const down = "1:74 2:20 3:22 4:15 5:24 6:40 7:16 8:20 9:12 10:13 14:10 15:16 16:9 20:14 21:73 25:35 26:35 39:65 40:10 " +
        "48:8 58:10 61:18 81:18 83:12 84:25 93:35 94:73 95:40 98:22 107:26 109:10 116:20 128:8 133:20 134:62 " +
        "157:8 165:12 167:14 179:8 197:8";
    up.split(" ").forEach(v => { const [i, h] = v.split(":"); bar(svg, +i, 910 - h, +h, "#e32b2b"); });
    down.split(" ").forEach(v => { const [i, h] = v.split(":"); bar(svg, +i, 910, +h, "#149014"); });
    curve(svg, "28,912 35,948 41,880 47,895 54,912 60,935 66,948 73,915 79,930 85,912 92,885 98,915 104,925 111,915 " +
        "117,735 123,830 130,885 136,905 155,912 161,965 168,908 180,912 187,945 193,945 200,910 230,914 " +
        "240,908 250,913 270,908 276,972 283,912 288,908 295,887 300,908 318,905 325,911 335,905 350,909 " +
        "365,905 380,909 395,905 410,908 416,925 422,908 455,912 480,915 508,911 517,892 524,886 528,906 550,905 " +
        "562,935 567,912 580,906 594,900 610,912 625,982 636,910 651,905 657,918 680,911 702,910 708,933 714,910 " +
        "721,908 727,835 734,910 758,912 765,928 770,910 795,905 816,917 825,910 841,919 848,909 870,908 879,972 " +
        "886,910 898,900 912,902 917,905 924,805 930,910 943,901 960,910 981,898 990,908 1030,918 1045,907 " +
        "1076,920 1088,900 1100,908 1125,904 1140,911 1165,904 1172,912 1190,908 1210,912 1235,906 1250,912 " +
        "1270,908 1279,918 1290,911 1311,910", "#332222");
}

function addLevels(id, side, rows) {
    document.getElementById(id).innerHTML = rows.map(r => {
        const [label, price, qty, width, dot] = r;
        const color = price > 2.415 ? "red" : price < 2.405 ? "green" : "";
        return `<div class="level"><span class="label">${label}</span><span class="px ${color}">${price}</span>` +
            `<span class="qty"><i class="bar ${side}" style="width:${width}px"></i>${qty}</span>` +
            `<i class="dot" style="background:${dot || "none"}"></i></div>`;
    }).join("");
}

addLevels("asks", "ask", [
    ["卖11", "2.50", "7.5万", 48],
    ["卖10", "2.49", "4.8万", 30, "#3a78c4"],
    ["卖9", "2.48", "12.3万", 79],
    ["卖8", "2.47", "7.6万", 49],
    ["卖7", "2.46", "9.3万", 60],
    ["卖6", "2.45", "13.2万", 85],
    ["卖5", "2.44", "14.9万", 96],
    ["卖4", "2.43", "13.4万", 86],
    ["卖3", "2.42", "10.6万", 68],
    ["卖2", "2.41", "10.6万", 69],
    ["卖1", "2.40", "11.2万", 72]
]);

addLevels("bids", "bid", [
    ["买1", "2.39", "13.2万", 85, "#e35b0e"],
    ["买2", "2.38", "15.4万", 100, "#e35b0e"],
    ["买3", "2.37", "5.6万", 36, "#e35b0e"],
    ["买4", "2.36", "4.5万", 29, "#e35b0e"],
    ["买5", "2.35", "5.4万", 34, "#e35b0e"],
    ["买6", "2.34", "2.7万", 17, "#e35b0e"],
    ["买7", "2.33", "2.5万", 16, "#e35b0e"],
    ["买8", "2.32", "3239", 2, "#8e8e93"],
    ["买9", "2.31", "3565", 2, "#8e8e93"],
    ["买10", "2.30", "8892", 5, "#8e8e93"],
    ["买11", "2.29", "1767", 1, "#8e8e93"]
]);

drawPrice();
drawVolume();
drawMacd();
drawPower();
drawNet();
```
